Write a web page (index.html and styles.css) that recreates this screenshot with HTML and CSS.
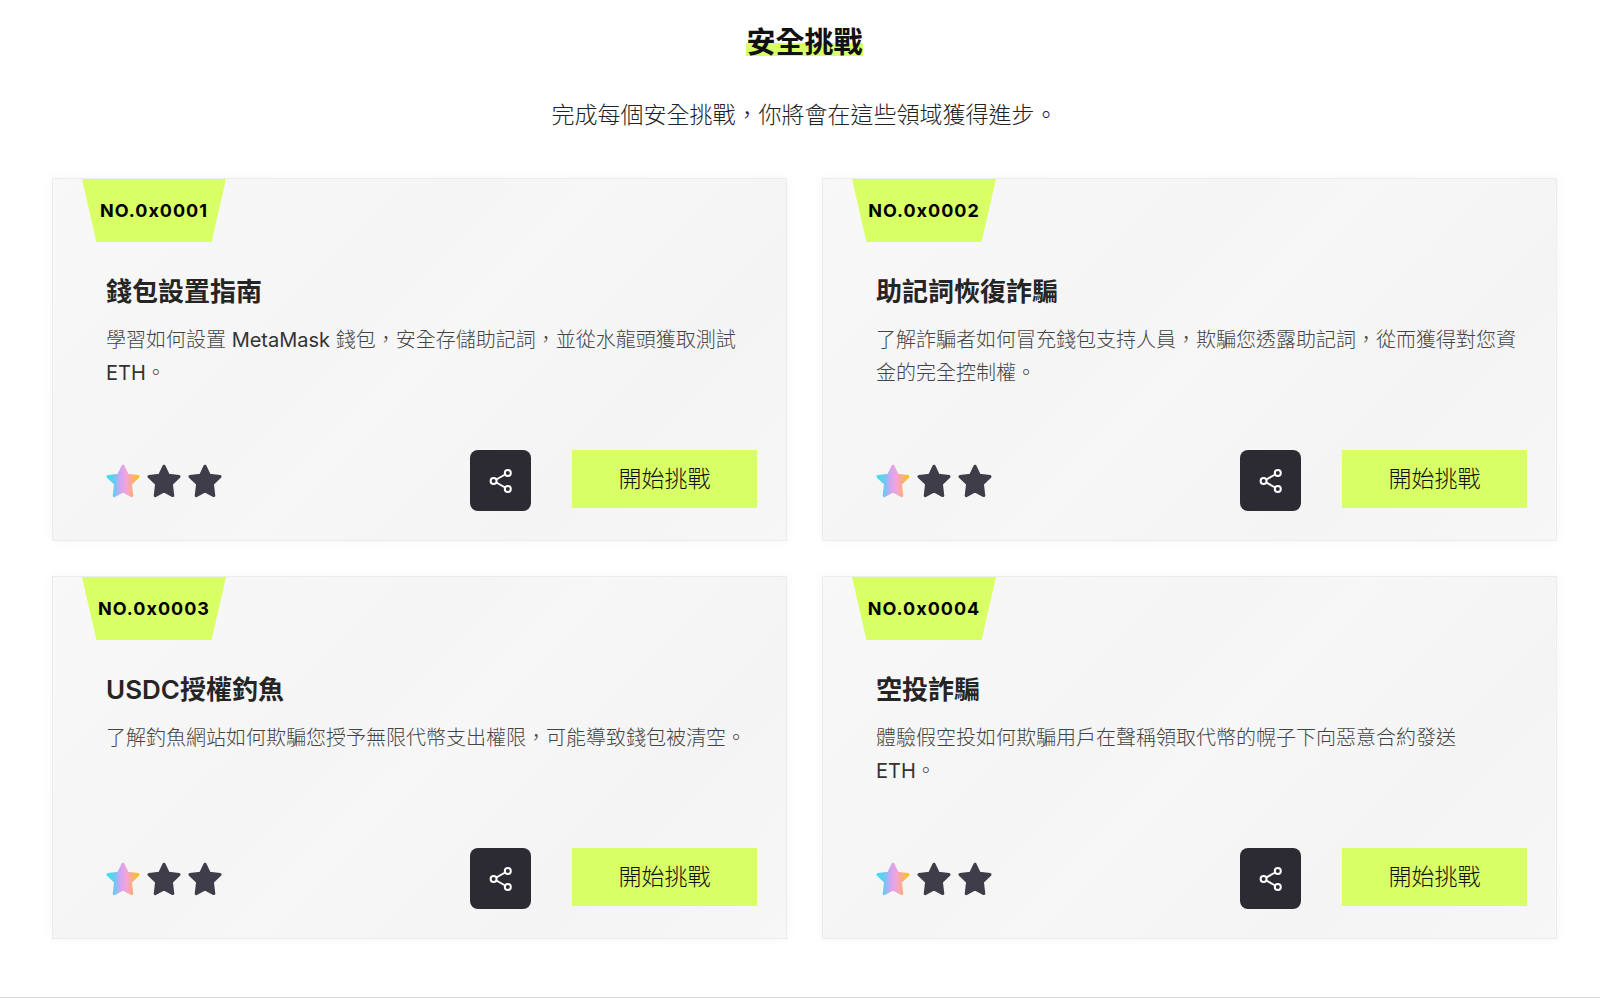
FILE: index.html
```html
<!DOCTYPE html>
<html lang="zh-Hant">
<head>
<meta charset="utf-8">
<meta name="viewport" content="width=device-width, initial-scale=1">
<title>安全挑戰</title>
<link rel="stylesheet" href="styles.css">
</head>
<body>
<svg class="defs" aria-hidden="true">
  <defs>
    <linearGradient id="rainbow" x1="0" y1="0" x2="1" y2="0">
      <stop offset="0" stop-color="#3fe0ee"/>
      <stop offset="0.22" stop-color="#6fc8f2"/>
      <stop offset="0.42" stop-color="#d3a4f2"/>
      <stop offset="0.6" stop-color="#f3a3dc"/>
      <stop offset="0.78" stop-color="#fbaa90"/>
      <stop offset="1" stop-color="#f9c21c"/>
    </linearGradient>
    <symbol id="star" viewBox="0 0 34 34">
      <path stroke-width="3" stroke-linejoin="round" d="M17 2.2 21.3 11.2 32 12.6 24.4 20 25.8 31.6 17 27 8.2 31.6 9.6 20 2 12.6 12.7 11.2Z"/>
    </symbol>
    <symbol id="share" viewBox="0 0 24 24">
      <g fill="none" stroke="#fff" stroke-width="2">
        <circle cx="4.6" cy="12" r="3"/>
        <circle cx="18.8" cy="4" r="3"/>
        <circle cx="18.8" cy="20" r="3"/>
        <path d="M7.3 10.5 16.1 5.5M7.3 13.5 16.1 18.5"/>
      </g>
    </symbol>
  </defs>
</svg>
<main class="page">
  <h1 class="heading"><span class="heading-mark">安全挑戰</span></h1>
  <p class="intro">完成每個安全挑戰，你將會在這些領域獲得進步。</p>
  <section class="grid">
    <article class="card">
      <span class="badge">NO.0x0001</span>
      <div class="body">
        <h2 class="title">錢包設置指南</h2>
        <p class="desc">學習如何設置 <span class="latin">MetaMask</span> 錢包，安全存儲助記詞，並從水龍頭獲取測試 <span class="latin">ETH</span>。</p>
      </div>
      <div class="footer">
        <div class="stars" role="img" aria-label="1 / 3"><svg class="star star-on"><use href="#star"/></svg><svg class="star"><use href="#star"/></svg><svg class="star"><use href="#star"/></svg></div>
        <div class="actions">
          <button class="share" type="button" aria-label="分享"><svg class="share-icon"><use href="#share"/></svg></button>
          <button class="start" type="button">開始挑戰</button>
        </div>
      </div>
    </article>
    <article class="card">
      <span class="badge">NO.0x0002</span>
      <div class="body">
        <h2 class="title">助記詞恢復詐騙</h2>
        <p class="desc">了解詐騙者如何冒充錢包支持人員，欺騙您透露助記詞，從而獲得對您資金的完全控制權。</p>
      </div>
      <div class="footer">
        <div class="stars" role="img" aria-label="1 / 3"><svg class="star star-on"><use href="#star"/></svg><svg class="star"><use href="#star"/></svg><svg class="star"><use href="#star"/></svg></div>
        <div class="actions">
          <button class="share" type="button" aria-label="分享"><svg class="share-icon"><use href="#share"/></svg></button>
          <button class="start" type="button">開始挑戰</button>
        </div>
      </div>
    </article>
    <article class="card">
      <span class="badge">NO.0x0003</span>
      <div class="body">
        <h2 class="title"><span class="title-latin">USDC</span>授權釣魚</h2>
        <p class="desc">了解釣魚網站如何欺騙您授予無限代幣支出權限，可能導致錢包被清空。</p>
      </div>
      <div class="footer">
        <div class="stars" role="img" aria-label="1 / 3"><svg class="star star-on"><use href="#star"/></svg><svg class="star"><use href="#star"/></svg><svg class="star"><use href="#star"/></svg></div>
        <div class="actions">
          <button class="share" type="button" aria-label="分享"><svg class="share-icon"><use href="#share"/></svg></button>
          <button class="start" type="button">開始挑戰</button>
        </div>
      </div>
    </article>
    <article class="card">
      <span class="badge">NO.0x0004</span>
      <div class="body">
        <h2 class="title">空投詐騙</h2>
        <p class="desc">體驗假空投如何欺騙用戶在聲稱領取代幣的幌子下向惡意合約發送 <span class="latin">ETH</span>。</p>
      </div>
      <div class="footer">
        <div class="stars" role="img" aria-label="1 / 3"><svg class="star star-on"><use href="#star"/></svg><svg class="star"><use href="#star"/></svg><svg class="star"><use href="#star"/></svg></div>
        <div class="actions">
          <button class="share" type="button" aria-label="分享"><svg class="share-icon"><use href="#share"/></svg></button>
          <button class="start" type="button">開始挑戰</button>
        </div>
      </div>
    </article>
  </section>
</main>
</body>
</html>
```

FILE: styles.css
```css
* {
  box-sizing: border-box;
}

body {
  margin: 0;
  background: #fff;
  color: #111;
  font-family: Inter, "Noto Sans CJK TC", sans-serif;
}

.defs {
  position: absolute;
  width: 0;
  height: 0;
}

.page {
  padding: 25px 43px 58px 52px;
  border-bottom: 1px solid #dcdcdc;
}

.heading {
  margin: 0;
  text-align: center;
  font-size: 29px;
  line-height: 36px;
  font-weight: 700;
}

.heading-mark {
  display: inline-block;
  background: linear-gradient(transparent 50%, #d9ff66 50%, #d9ff66 86%, transparent 86%);
}

.intro {
  margin: 37px 0 45px;
  text-align: center;
  font-size: 23px;
  line-height: 35px;
  font-weight: 300;
  color: #222;
}

.grid {
  display: grid;
  grid-template-columns: 1fr 1fr;
  gap: 35px;
}

.card {
  display: flex;
  flex-direction: column;
  align-items: flex-start;
  min-height: 363px;
  padding: 0 29px 29px;
  border: 1px solid #ececec;
  background: linear-gradient(135deg, #f8f8f8, #f5f5f5 40%, #f7f7f7 50%, #f4f4f4 75%, #f7f7f7);
  box-shadow: 0 0 12px rgba(0, 0, 0, 0.04);
}

.badge {
  width: 144px;
  height: 63px;
  background: #d9ff66;
  clip-path: polygon(0 0, 100% 0, 90% 100%, 10% 100%);
  text-align: center;
  font-size: 18px;
  line-height: 64px;
  font-weight: 700;
  letter-spacing: 1px;
  color: #000;
}

.body {
  flex: 1;
  padding: 30px 0 16px 24px;
}

.title {
  margin: 0;
  font-size: 26px;
  line-height: 40px;
  font-weight: 700;
  color: #252525;
}

.title-latin {
  font-weight: 600;
}

.desc {
  max-width: 32em;
  margin: 12px 0 0;
  font-size: 20px;
  line-height: 33px;
  font-weight: 300;
  color: #444;
}

.latin {
  font-weight: 400;
  color: #333;
}

.footer {
  display: flex;
  align-items: center;
  justify-content: space-between;
  align-self: stretch;
  padding-left: 24px;
}

.stars {
  display: flex;
  gap: 7px;
}

.star {
  width: 34px;
  height: 34px;
  fill: #3e3d49;
  stroke: #3e3d49;
}

.star-on {
  fill: url(#rainbow);
  stroke: url(#rainbow);
}

.actions {
  display: flex;
  align-items: flex-start;
  gap: 41px;
}

.share {
  display: flex;
  align-items: center;
  justify-content: center;
  width: 61px;
  height: 61px;
  padding: 0;
  border: 0;
  border-radius: 8px;
  background: #2c2b33;
}

.share-icon {
  width: 24px;
  height: 24px;
}

.start {
  min-width: 185px;
  height: 58px;
  padding: 0 46px;
  border: 0;
  background: #d9ff66;
  font-family: inherit;
  font-size: 23px;
  line-height: 58px;
  font-weight: 300;
  color: #111;
}
```
